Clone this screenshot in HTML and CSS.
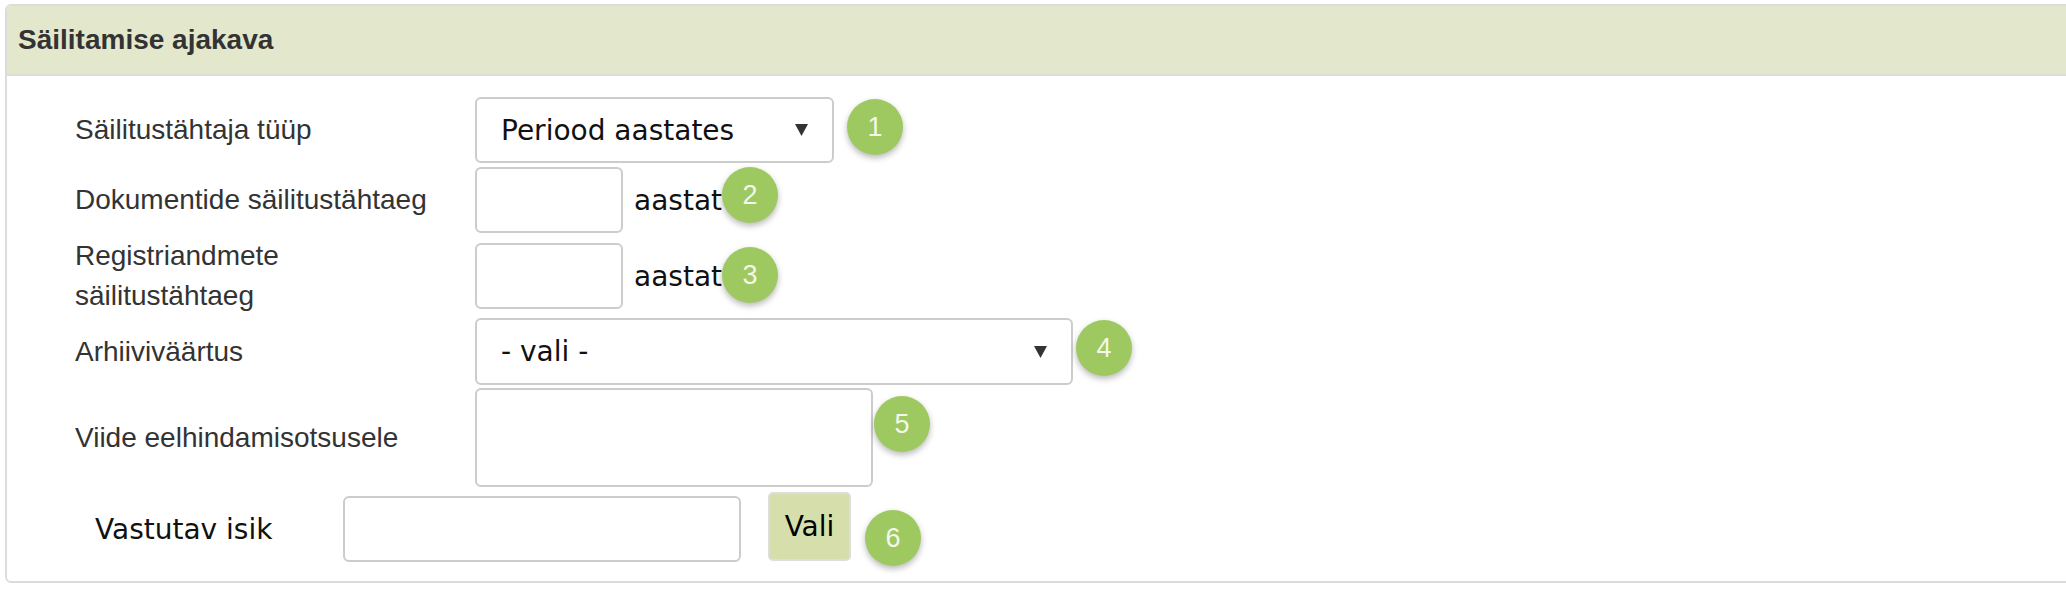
FILE: index.html
```html
<!DOCTYPE html>
<html lang="et">
<head>
<meta charset="utf-8">
<title>Säilitamise ajakava</title>
<link rel="stylesheet" href="styles.css">
</head>
<body>
<div class="panel">
  <div class="panel-heading">Säilitamise ajakava</div>
  <div class="panel-body">
    <div class="row r1">
      <label class="lbl">Säilitustähtaja tüüp</label>
      <div class="select sel-type"><span>Periood aastates</span><svg class="caret" width="13" height="12" viewBox="0 0 13 12"><polygon points="0,0 13,0 6.5,12" fill="#333"/></svg></div>
      <span class="badge b1">1</span>
    </div>
    <div class="row r2">
      <label class="lbl">Dokumentide säilitustähtaeg</label>
      <input class="input num" type="text">
      <span class="unit">aastat</span>
      <span class="badge b2">2</span>
    </div>
    <div class="row r3">
      <label class="lbl">Registriandmete säilitustähtaeg</label>
      <input class="input num" type="text">
      <span class="unit">aastat</span>
      <span class="badge b3">3</span>
    </div>
    <div class="row r4">
      <label class="lbl">Arhiiviväärtus</label>
      <div class="select sel-value"><span>- vali -</span><svg class="caret" width="13" height="12" viewBox="0 0 13 12"><polygon points="0,0 13,0 6.5,12" fill="#333"/></svg></div>
      <span class="badge b4">4</span>
    </div>
    <div class="row r5">
      <label class="lbl">Viide eelhindamisotsusele</label>
      <textarea class="input area"></textarea>
      <span class="badge b5">5</span>
    </div>
    <div class="row r6">
      <label class="lbl lbl-person">Vastutav isik</label>
      <input class="input person" type="text">
      <button class="btn" type="button">Vali</button>
      <span class="badge b6">6</span>
    </div>
  </div>
</div>
</body>
</html>
```
FILE: styles.css
```css
html, body {
  overflow: hidden;
}
body {
  margin: 0;
  padding: 4px 0 0 5px;
  background: #fff;
  font-family: "Liberation Sans", Arial, sans-serif;
}
.panel {
  width: 2100px;
  border: 2px solid #dcdcdc;
  border-radius: 6px;
  background: #fff;
}
.panel-heading {
  height: 68px;
  display: flex;
  align-items: center;
  padding-left: 11px;
  background: #e3e8cd;
  border-bottom: 2px solid #dcdcdc;
  border-radius: 4px 4px 0 0;
  font-weight: bold;
  font-size: 28px;
  color: #333;
}
.panel-body {
  padding: 21px 0 19px 68px;
}
.row {
  display: flex;
  align-items: center;
}
.r2 { margin-top: 4px; }
.r3 { margin-top: 10px; height: 66px; }
.r4 { margin-top: 9px; }
.r5 { margin-top: 3px; }
.r6 {
  margin-top: 5px;
  height: 70px;
  align-items: flex-start;
  padding-left: 20px;
}
.lbl {
  flex: none;
  width: 400px;
  padding-right: 36px;
  box-sizing: border-box;
  font-size: 28px;
  line-height: 40px;
  color: #333;
}
.lbl-person {
  width: 248px;
  padding-right: 0;
  margin-top: 20px;
  line-height: 36px;
  font-family: "DejaVu Sans", Verdana, sans-serif;
  color: #111;
}
.input, .select {
  flex: none;
  box-sizing: border-box;
  border: 2px solid #cccccc;
  border-radius: 6px;
  background: #fff;
  font-family: "DejaVu Sans", Verdana, sans-serif;
  font-size: 28px;
  color: #111;
  margin: 0;
  outline: none;
}
.select {
  display: flex;
  align-items: center;
  justify-content: space-between;
  padding: 0 24px;
}
.sel-type { width: 359px; height: 66px; }
.sel-value { width: 598px; height: 67px; }
.caret { flex: none; }
.num { width: 148px; height: 66px; }
.unit {
  margin-left: 11px;
  font-family: "DejaVu Sans", Verdana, sans-serif;
  font-size: 28px;
  color: #111;
}
.area {
  width: 398px;
  height: 99px;
  resize: none;
  display: block;
}
.person {
  width: 398px;
  height: 66px;
  margin-top: 4px;
}
.btn {
  flex: none;
  width: 83px;
  height: 69px;
  margin-left: 27px;
  padding: 0;
  box-sizing: border-box;
  background: #d6dfab;
  border: 2px solid #dddddd;
  border-radius: 5px;
  font-family: "DejaVu Sans", Verdana, sans-serif;
  font-size: 28px;
  color: #000;
}
.badge {
  flex: none;
  align-self: flex-start;
  width: 56px;
  height: 56px;
  border-radius: 50%;
  display: flex;
  align-items: center;
  justify-content: center;
  background: #9dc960;
  box-shadow: 0 3px 6px rgba(0, 0, 0, 0.28);
  font-family: "Liberation Sans", Arial, sans-serif;
  font-size: 27px;
  color: #f4f7ea;
}
.b1 { margin-left: 13px; margin-top: 2px; }
.b2 { margin-left: 0; margin-top: 0; }
.b3 { margin-left: 0; margin-top: 4px; }
.b4 { margin-left: 3px; margin-top: 2px; }
.b5 { margin-left: 1px; margin-top: 8px; }
.b6 { margin-left: 14px; margin-top: 18px; }
```
